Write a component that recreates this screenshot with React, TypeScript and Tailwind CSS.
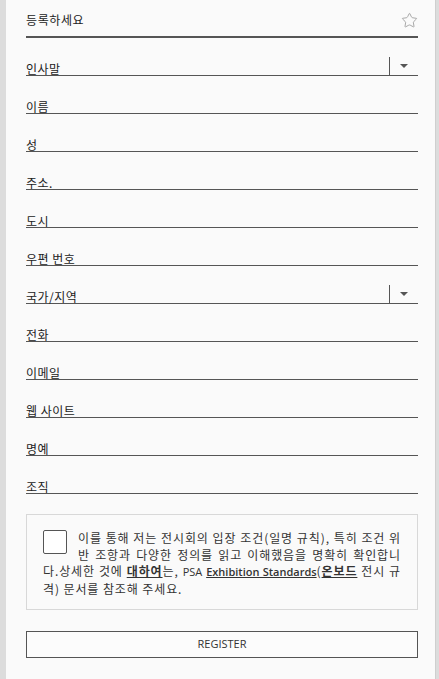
import { Star } from "lucide-react"

const fields = [
  { label: "인사말", select: true },
  { label: "이름" },
  { label: "성" },
  { label: "주소." },
  { label: "도시" },
  { label: "우편 번호" },
  { label: "국가/지역", select: true },
  { label: "전화" },
  { label: "이메일" },
  { label: "웹 사이트" },
  { label: "명예" },
  { label: "조직" },
]

function Field({ label, select }: { label: string; select?: boolean }) {
  return (
    <div className="flex h-[38px] items-end border-b border-[#555]">
      <span className="flex-1 text-[12px] leading-none tracking-[0.5px] text-[#222]">{label}</span>
      {select && (
        <>
          <div className="h-[18px] w-px bg-[#555]" />
          <div className="flex h-[18px] w-[28px] items-center justify-center">
            <div className="h-0 w-0 border-x-[4px] border-t-[4px] border-x-transparent border-t-[#555]" />
          </div>
        </>
      )}
    </div>
  )
}

export default function App() {
  return (
    <div
      className="min-h-screen bg-[#dcdcdc] pl-[6px] pr-[3px]"
      style={{ fontFamily: '"Noto Sans CJK KR", "Open Sans", sans-serif' }}
    >
      <div className="min-h-[679px] border-r border-[#cfcfcf] bg-[#fafafa] pb-5 pl-[20px] pr-[17px]">
        <div className="flex h-[38px] items-center justify-between border-b-2 border-[#555] pt-[4px]">
          <span className="text-[12px] tracking-[0.6px] text-[#222]">등록하세요</span>
          <Star size={17} strokeWidth={1.2} className="text-[#9a9a9a]" />
        </div>

        {fields.map((f) => (
          <Field key={f.label} label={f.label} select={f.select} />
        ))}

        <div className="mt-[20px] border border-[#d8d8d8] px-[16px] pb-[12px] pt-[15px]">
          <div className="float-left mr-[11px] h-[24px] w-[24px] rounded-[2px] border border-[#555] bg-white" />
          <p className="text-justify text-[12px] leading-[16.5px] tracking-[0.9px] text-[#333]">
            이를 통해 저는 전시회의 입장 조건(일명 규칙), 특히 조건 위반 조항과 다양한 정의를 읽고 이해했음을 명확히
            확인합니다.상세한 것에 <b className="font-semibold underline">대하여</b>는,{" "}
            <span className="font-['Open_Sans'] text-[11px] tracking-normal">PSA</span>{" "}
            <b className="font-['Open_Sans'] text-[11px] font-semibold tracking-normal underline">Exhibition Standards</b>(
            <b className="font-semibold underline">온보드</b> 전시 규격) 문서를 참조해 주세요.
          </p>
        </div>

        <button className="mt-[21px] flex h-[27px] w-full items-center justify-center border border-[#555] bg-[#fcfcfc] font-['Open_Sans'] text-[11px] text-[#333]">
          REGISTER
        </button>
      </div>
    </div>
  )
}
